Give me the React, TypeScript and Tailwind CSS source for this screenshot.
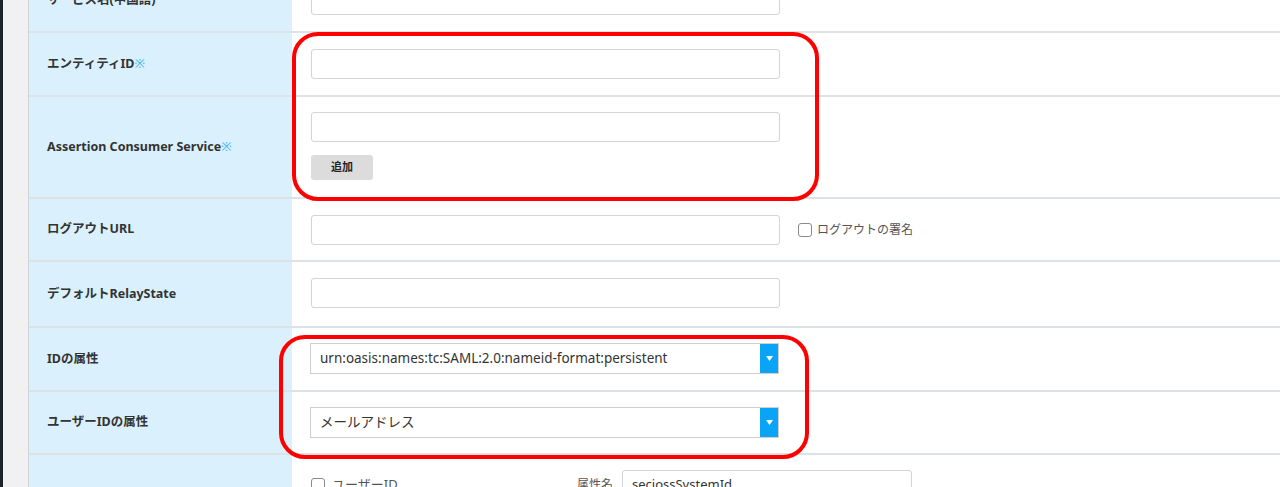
import type { ReactNode } from "react";

const labelFont = { fontFamily: '"Noto Sans", "Noto Sans CJK JP", sans-serif' };

function Req() {
  return <span className="text-[#3fb1ee] font-normal">※</span>;
}

function TextInput({ value, width = "w-[469px]" }: { value?: string; width?: string }) {
  return (
    <div className={`${width} h-[30px] shrink-0 bg-white border border-[#d4d4d4] rounded-[3px] px-[9px] flex items-center text-[13px] text-[#333]`}>
      {value}
    </div>
  );
}

function Select({ value }: { value: string }) {
  return (
    <div className="w-[469px] h-[31px] bg-white border border-[#cfcfcf] flex items-center ml-[-1px]">
      <span className="flex-1 px-[9px] text-[13.5px] text-[#333] truncate">{value}</span>
      <span className="w-[18px] h-full bg-[#0aa4f6] flex items-center justify-center">
        <svg width="7" height="5" viewBox="0 0 7 5">
          <path d="M0 0h7L3.5 5z" fill="#fff" />
        </svg>
      </span>
    </div>
  );
}

function Checkbox() {
  return <span className="inline-block w-[14px] h-[14px] shrink-0 border border-[#8a8a8a] rounded-[3px] bg-white" />;
}

function Row({ label, height, children }: { label?: ReactNode; height: string; children?: ReactNode }) {
  return (
    <div className={`flex shrink-0 ${height} border-b-2 border-[#dde2e6]`}>
      <div className="w-[263px] shrink-0 bg-[#daf1fd] flex items-center pl-[18px] text-[12.5px] font-bold text-[#333]" style={labelFont}>
        {label}
      </div>
      <div className="flex-1 pl-[19px]">{children}</div>
    </div>
  );
}

export default function App() {
  return (
    <div className="relative w-[1280px] h-[487px] overflow-hidden bg-white flex" style={labelFont}>
      <div className="w-[3px] shrink-0 bg-[#1e2329]" />
      <div className="w-[26px] shrink-0 bg-[#f1f1f1] border-r border-[#cfd3d6]" />
      <div className="flex-1 flex flex-col mt-[-31px]">
        <Row label="サービス名(中国語)" height="h-[64px]">
          <div className="pt-[16px]"><TextInput /></div>
        </Row>
        <Row label={<>エンティティID<Req /></>} height="h-[64px]">
          <div className="pt-[16px]"><TextInput /></div>
        </Row>
        <Row label={<>Assertion Consumer Service<Req /></>} height="h-[102px]">
          <div className="pt-[15px] flex flex-col items-start gap-[13px]">
            <TextInput />
            <button className="w-[62px] h-[25px] bg-[#dcdcdc] rounded-[3px] text-[11px] font-bold text-[#222]">追加</button>
          </div>
        </Row>
        <Row label="ログアウトURL" height="h-[63px]">
          <div className="pt-[16px] flex items-center">
            <TextInput />
            <label className="ml-[18px] flex items-center gap-[5px] text-[12px] text-[#555]">
              <Checkbox />
              ログアウトの署名
            </label>
          </div>
        </Row>
        <Row label="デフォルトRelayState" height="h-[66px]">
          <div className="pt-[16px]"><TextInput /></div>
        </Row>
        <Row label="IDの属性" height="h-[64px]">
          <div className="pt-[15px]"><Select value="urn:oasis:names:tc:SAML:2.0:nameid-format:persistent" /></div>
        </Row>
        <Row label="ユーザーIDの属性" height="h-[63px]">
          <div className="pt-[15px]"><Select value="メールアドレス" /></div>
        </Row>
        <Row height="h-[80px]">
          <div className="pt-[15px] flex items-center">
            <label className="flex items-center gap-[7px] text-[13px] text-[#555] w-[266px]">
              <Checkbox />
              ユーザーID
            </label>
            <span className="text-[12px] text-[#555] w-[45px]">属性名</span>
            <TextInput value="seciossSystemId" width="w-[290px]" />
          </div>
        </Row>
      </div>

      <div className="absolute left-[292px] top-[32px] w-[527px] h-[169px] border-[4px] border-[#ff0000] rounded-[26px] pointer-events-none" />
      <div className="absolute left-[279px] top-[335px] w-[530px] h-[124px] border-[4px] border-[#ff0000] rounded-[26px] pointer-events-none" />
    </div>
  );
}
